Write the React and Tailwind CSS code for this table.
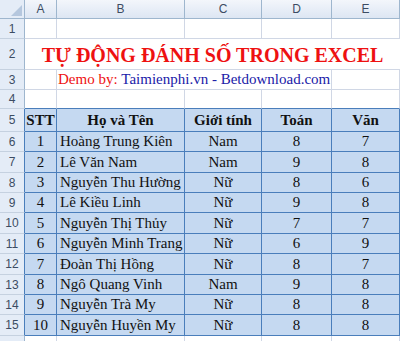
const serif = { fontFamily: '"Liberation Serif", "Times New Roman", serif' }

const rows = [
  [1, 'Hoàng Trung Kiên', 'Nam', 8, 7],
  [2, 'Lê Văn Nam', 'Nam', 9, 8],
  [3, 'Nguyễn Thu Hường', 'Nữ', 8, 6],
  [4, 'Lê Kiều Linh', 'Nữ', 9, 8],
  [5, 'Nguyễn Thị Thủy', 'Nữ', 7, 7],
  [6, 'Nguyễn Minh Trang', 'Nữ', 6, 9],
  [7, 'Đoàn Thị Hồng', 'Nữ', 8, 7],
  [8, 'Ngô Quang Vinh', 'Nam', 9, 8],
  [9, 'Nguyễn Trà My', 'Nữ', 8, 8],
  [10, 'Nguyễn Huyền My', 'Nữ', 8, 8],
]

// heights of rows 6..15 (sum 204)
const bodyHeights = ['h-[20px]', 'h-[21px]', 'h-[20px]', 'h-[20px]', 'h-[21px]', 'h-[20px]', 'h-[21px]', 'h-[20px]', 'h-[20px]', 'h-[21px]']

function RowHead({ n, blue }) {
  return (
    <div
      className={`flex w-[25px] shrink-0 items-center justify-center border-b border-r border-b-[#c5d1e0] bg-[#e4ecf7] text-[12px] text-[#3c4c63] ${
        blue ? 'border-r-[#4a7ebb]' : 'border-r-[#9eb6ce]'
      }`}
      style={{ fontFamily: '"Liberation Sans", Arial, sans-serif' }}
    >
      {n}
    </div>
  )
}

function Cell({ w, children, className = '' }) {
  return <div className={`shrink-0 border-b border-r border-[#d0d7e5] ${w} ${className}`}>{children}</div>
}

function EmptyRow({ n, h, blueBottom }) {
  const b = blueBottom ? 'border-b-[#4a7ebb]' : ''
  return (
    <div className={`flex ${h}`}>
      <RowHead n={n} />
      <Cell w={`w-[32px] ${b}`} />
      <Cell w={`w-[128px] ${b}`} />
      <Cell w={`w-[77px] ${b}`} />
      <Cell w={`w-[70px] ${b}`} />
      <Cell w={`w-[68px] ${b}`} />
    </div>
  )
}

function TCell({ w, children, left, bold }) {
  return (
    <div
      className={`flex shrink-0 items-center border-b border-r border-[#4a7ebb] bg-[#c5d9f1] text-[15px] leading-none text-[#111] ${w} ${
        left ? 'justify-start pl-[3px]' : 'justify-center'
      } ${bold ? 'font-bold' : ''}`}
      style={serif}
    >
      {children}
    </div>
  )
}

export default function App() {
  return (
    <div className="h-[341px] w-[400px] overflow-hidden bg-white">
      {/* column headers */}
      <div
        className="flex h-[19px] text-[12px] text-[#3c4c63]"
        style={{ fontFamily: '"Liberation Sans", Arial, sans-serif' }}
      >
        <div className="relative w-[25px] shrink-0 border-b border-r border-[#9eb6ce] bg-[#e4ecf7]">
          <svg className="absolute bottom-[2px] right-[2px]" width="11" height="11" viewBox="0 0 11 11">
            <polygon points="11,0 11,11 0,11" fill="#b5c7de" />
          </svg>
        </div>
        {[
          ['A', 'w-[32px]'],
          ['B', 'w-[128px]'],
          ['C', 'w-[77px]'],
          ['D', 'w-[70px]'],
          ['E', 'w-[68px]'],
        ].map(([l, w]) => (
          <div
            key={l}
            className={`flex shrink-0 items-center justify-center border-b border-r border-[#9eb6ce] bg-gradient-to-b from-[#f3f6fb] to-[#dde6f3] ${w}`}
          >
            {l}
          </div>
        ))}
      </div>

      <EmptyRow n={1} h="h-[20px]" />

      {/* title */}
      <div className="flex h-[31px]">
        <RowHead n={2} />
        <div
          className="flex w-[375px] items-center justify-center border-b border-[#d0d7e5] pt-[2px] text-[20px] font-bold text-[#ee1111]"
          style={serif}
        >
          TỰ ĐỘNG ĐÁNH SỐ TRONG EXCEL
        </div>
      </div>

      {/* demo line */}
      <div className="flex h-[20px]">
        <RowHead n={3} />
        <Cell w="w-[32px]" />
        <div
          className="flex w-[275px] shrink-0 items-center whitespace-nowrap border-b border-r border-[#d0d7e5] pl-[1px] text-[15px] leading-none"
          style={serif}
        >
          <span className="text-[#ee1111]">Demo by:&nbsp;</span>
          <span className="text-[#2020a8]">Taimienphi.vn - Betdownload.com</span>
        </div>
        <Cell w="w-[68px]" />
      </div>

      <EmptyRow n={4} h="h-[19px]" blueBottom />

      {/* table header */}
      <div className="flex h-[23px]">
        <RowHead n={5} blue />
        <TCell w="w-[32px]" bold>STT</TCell>
        <TCell w="w-[128px]" bold>Họ và Tên</TCell>
        <TCell w="w-[77px]" bold>Giới tính</TCell>
        <TCell w="w-[70px]" bold>Toán</TCell>
        <TCell w="w-[68px]" bold>Văn</TCell>
      </div>

      {rows.map((r, i) => (
        <div key={r[0]} className={`flex ${bodyHeights[i]}`}>
          <RowHead n={i + 6} blue />
          <TCell w="w-[32px]">{r[0]}</TCell>
          <TCell w="w-[128px]" left>{r[1]}</TCell>
          <TCell w="w-[77px]">{r[2]}</TCell>
          <TCell w="w-[70px]">{r[3]}</TCell>
          <TCell w="w-[68px]">{r[4]}</TCell>
        </div>
      ))}

      {/* sliver of row 16 */}
      <EmptyRow n="" h="h-[20px]" />
    </div>
  )
}
